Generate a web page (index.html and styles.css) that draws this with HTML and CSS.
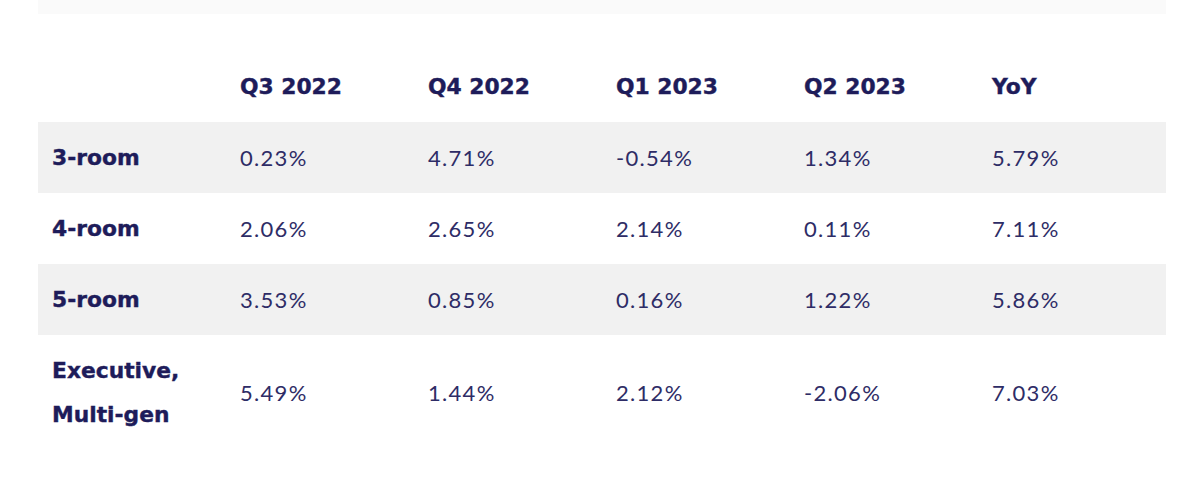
FILE: index.html
```html
<!DOCTYPE html>
<html lang="en">
<head>
<meta charset="utf-8">
<title>HDB resale price changes</title>
<link rel="stylesheet" href="styles.css">
</head>
<body>
<div class="page">
  <div class="strip"></div>
  <table class="prices">
    <thead>
      <tr>
        <th class="label"></th>
        <th>Q3 2022</th>
        <th>Q4 2022</th>
        <th>Q1 2023</th>
        <th>Q2 2023</th>
        <th>YoY</th>
      </tr>
    </thead>
    <tbody>
      <tr class="shade">
        <th class="label">3-room</th>
        <td>0.23%</td><td>4.71%</td><td>-0.54%</td><td>1.34%</td><td>5.79%</td>
      </tr>
      <tr>
        <th class="label">4-room</th>
        <td>2.06%</td><td>2.65%</td><td>2.14%</td><td>0.11%</td><td>7.11%</td>
      </tr>
      <tr class="shade">
        <th class="label">5-room</th>
        <td>3.53%</td><td>0.85%</td><td>0.16%</td><td>1.22%</td><td>5.86%</td>
      </tr>
      <tr>
        <th class="label">Executive,<br>Multi-gen</th>
        <td>5.49%</td><td>1.44%</td><td>2.12%</td><td>-2.06%</td><td>7.03%</td>
      </tr>
    </tbody>
  </table>
</div>
</body>
</html>
```

FILE: styles.css
```css
html, body {
  margin: 0;
  padding: 0;
  background: #ffffff;
}

.page {
  padding: 0 0 0 38px;
  color: #1e1c5a;
}

.strip {
  width: 1128px;
  height: 14px;
  background: #fafafa;
  margin-bottom: 37px;
}

.prices {
  width: 1128px;
  border-collapse: collapse;
  table-layout: fixed;
}

.prices th,
.prices td {
  box-sizing: border-box;
  width: 188px;
  padding: 13.5px 14px;
  line-height: 44px;
  text-align: left;
  vertical-align: middle;
}

.prices th {
  font-family: "DejaVu Sans", "Liberation Sans", sans-serif;
  font-size: 21.8px;
  font-weight: 700;
  color: #1e1c5a;
  -webkit-text-stroke: 0.4px #1e1c5a;
}

.prices td {
  font-family: "Lato", "Liberation Sans", sans-serif;
  font-size: 22px;
  font-weight: 400;
  letter-spacing: 1.3px;
  color: #2e2c66;
}

.prices .shade {
  background: #f1f1f1;
}
```
